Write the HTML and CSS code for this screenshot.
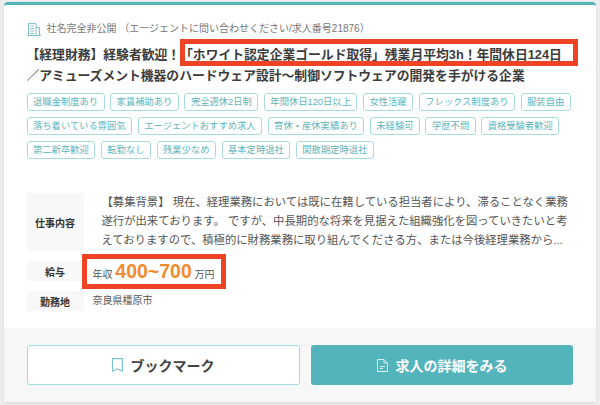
FILE: index.html
```html
<!DOCTYPE html>
<html lang="ja">
<head>
  <meta charset="UTF-8" />
  <title>求人カード</title>
  <link rel="stylesheet" href="styles.css">
</head>
<body>
  <div class="card">
    <div class="card-body">
      <div class="company">
        <svg class="company-icon" width="14" height="13" viewBox="0 0 14 13" fill="none" stroke="#7cc4ca" stroke-width="1">
          <path d="M1.500 12.500V.5H9V12.500M9 4.500H12.500V12.500M0 12.500H14" />
          <path d="M3.500 3H7M3.500 5.500H7M3.500 8H7M3.500 10.500H7" />
        </svg>
        <span>社名完全非公開 （エージェントに問い合わせください/求人番号21876）</span>
      </div>
      <h2 class="title">【経理財務】経験者歓迎！「ホワイト認定企業ゴールド取得」残業月平均3h！年間休日124日<br>／アミューズメント機器のハードウェア設計〜制御ソフトウェアの開発を手がける企業</h2>
      <ul class="tags">
        <li>退職金制度あり</li>
        <li>家賃補助あり</li>
        <li>完全週休2日制</li>
        <li>年間休日120日以上</li>
        <li>女性活躍</li>
        <li>フレックス制度あり</li>
        <li>服装自由</li>
        <li>落ち着いている雰囲気</li>
        <li>エージェントおすすめ求人</li>
        <li>育休・産休実績あり</li>
        <li>未経験可</li>
        <li>学歴不問</li>
        <li>資格受験者歓迎</li>
        <li>第二新卒歓迎</li>
        <li>転勤なし</li>
        <li>残業少なめ</li>
        <li>基本定時退社</li>
        <li>閑散期定時退社</li>
      </ul>
      <div class="info">
        <div class="info-label">仕事内容</div>
        <div class="info-text">
          <p>【募集背景】 現在、経理業務においては既に在籍している担当者により、滞ることなく業務</p>
          <p>遂行が出来ております。 ですが、中長期的な将来を見据えた組織強化を図っていきたいと考</p>
          <p>えておりますので、積極的に財務業務に取り組んでくださる方、または今後経理業務から...</p>
        </div>
        <div class="info-label">給与</div>
        <div class="salary">年収 <strong>400~700</strong> 万円</div>
        <div class="info-label">勤務地</div>
        <div class="place">奈良県橿原市</div>
      </div>
    </div>
    <div class="card-footer">
      <a class="btn btn-outline">
        <svg width="11" height="14" viewBox="0 0 11 14" fill="none" stroke="#7cc4ca" stroke-width="1.200">
          <path d="M.6.6H10.400V13.200L5.500 10.800L.6 13.200Z" />
        </svg>
        ブックマーク
      </a>
      <a class="btn btn-fill">
        <svg width="11" height="13" viewBox="0 0 11 13" fill="none" stroke="#d5eef0" stroke-width="1">
          <path d="M.5.5H7L10.500 4V12.500H.5Z" />
          <path d="M7 .5V4H10.500M3 7.500H8M3 9.500H6" />
        </svg>
        求人の詳細をみる
      </a>
    </div>
    <div class="mark mark-title"></div>
    <div class="mark mark-salary"></div>
  </div>
</body>
</html>
```

FILE: styles.css
```css
* {
  box-sizing: border-box;
}

body {
  margin: 0;
  height: 405px;
  overflow: hidden;
  padding: 2px 4px 3px;
  background: #ececec;
  font-family: "Liberation Sans", "Noto Sans CJK JP", sans-serif;
  color: #333;
}

.card {
  position: relative;
  height: 400px;
  display: flex;
  flex-direction: column;
  background: #fff;
  border-top: 3px solid #54b4bc;
  border-radius: 4px 4px 0 0;
  box-shadow: 0 1px 3px rgba(0, 0, 0, 0.08);
}

.card-body {
  flex: 1;
  padding: 16px 22px 0 22.5px;
}

.company {
  display: flex;
  align-items: center;
  gap: 6px;
  font-size: 10px;
  line-height: 16px;
  color: #777;
}

.title {
  margin: 7px 0 0;
  font-size: 12.800px;
  line-height: 21px;
  font-weight: 700;
  color: #3c3c3c;
}

.tags {
  display: flex;
  flex-wrap: wrap;
  gap: 6px 5.5px;
  margin: 7px 0 0;
  padding: 0;
  list-style: none;
}

.tags li {
  height: 18px;
  padding: 0 5.500px;
  border: 1px solid #a9dade;
  border-radius: 3px;
  font-size: 9.300px;
  line-height: 16px;
  color: #5cb5bd;
}

.info {
  display: grid;
  grid-template-columns: 57px 1fr;
  gap: 10px 0;
  margin-top: 34px;
}

.info-label {
  display: flex;
  align-items: center;
  justify-content: center;
  background: #f8f8f8;
  font-size: 10px;
  font-weight: 700;
}

.info-text {
  padding: 0 0 1px 18px;
  font-size: 11.350px;
  line-height: 19px;
  color: #555;
}

.info-text p {
  margin: 0;
  white-space: nowrap;
}

.salary {
  height: 20px;
  padding-left: 9px;
  font-size: 10px;
  line-height: 20px;
  color: #555;
}

.salary strong {
  font-size: 19.500px;
  color: #f08c30;
}

.place {
  height: 20px;
  padding-left: 9px;
  font-size: 10px;
  line-height: 20px;
  color: #555;
}

.card-footer {
  display: grid;
  grid-template-columns: 273px 262px;
  gap: 11.500px;
  height: 74px;
  padding: 17px 22px 17px 22.500px;
  background: #f7f7f7;
}

.btn {
  display: flex;
  align-items: center;
  justify-content: center;
  gap: 8px;
  height: 40px;
  border-radius: 3px;
  font-size: 14px;
  font-weight: 700;
}

.btn-outline {
  background: #fff;
  border: 1px solid #a5dade;
  color: #444;
}

.btn-fill {
  background: #54b4bc;
  color: #fff;
}

/* red highlight boxes drawn over the card */
.mark {
  position: absolute;
  border: 5px solid #ee4325;
}

.mark-title {
  left: 176px;
  top: 34px;
  width: 398px;
  height: 27px;
}

.mark-salary {
  left: 78px;
  top: 249px;
  width: 144px;
  height: 35px;
  border-width: 5.500px;
}
```
